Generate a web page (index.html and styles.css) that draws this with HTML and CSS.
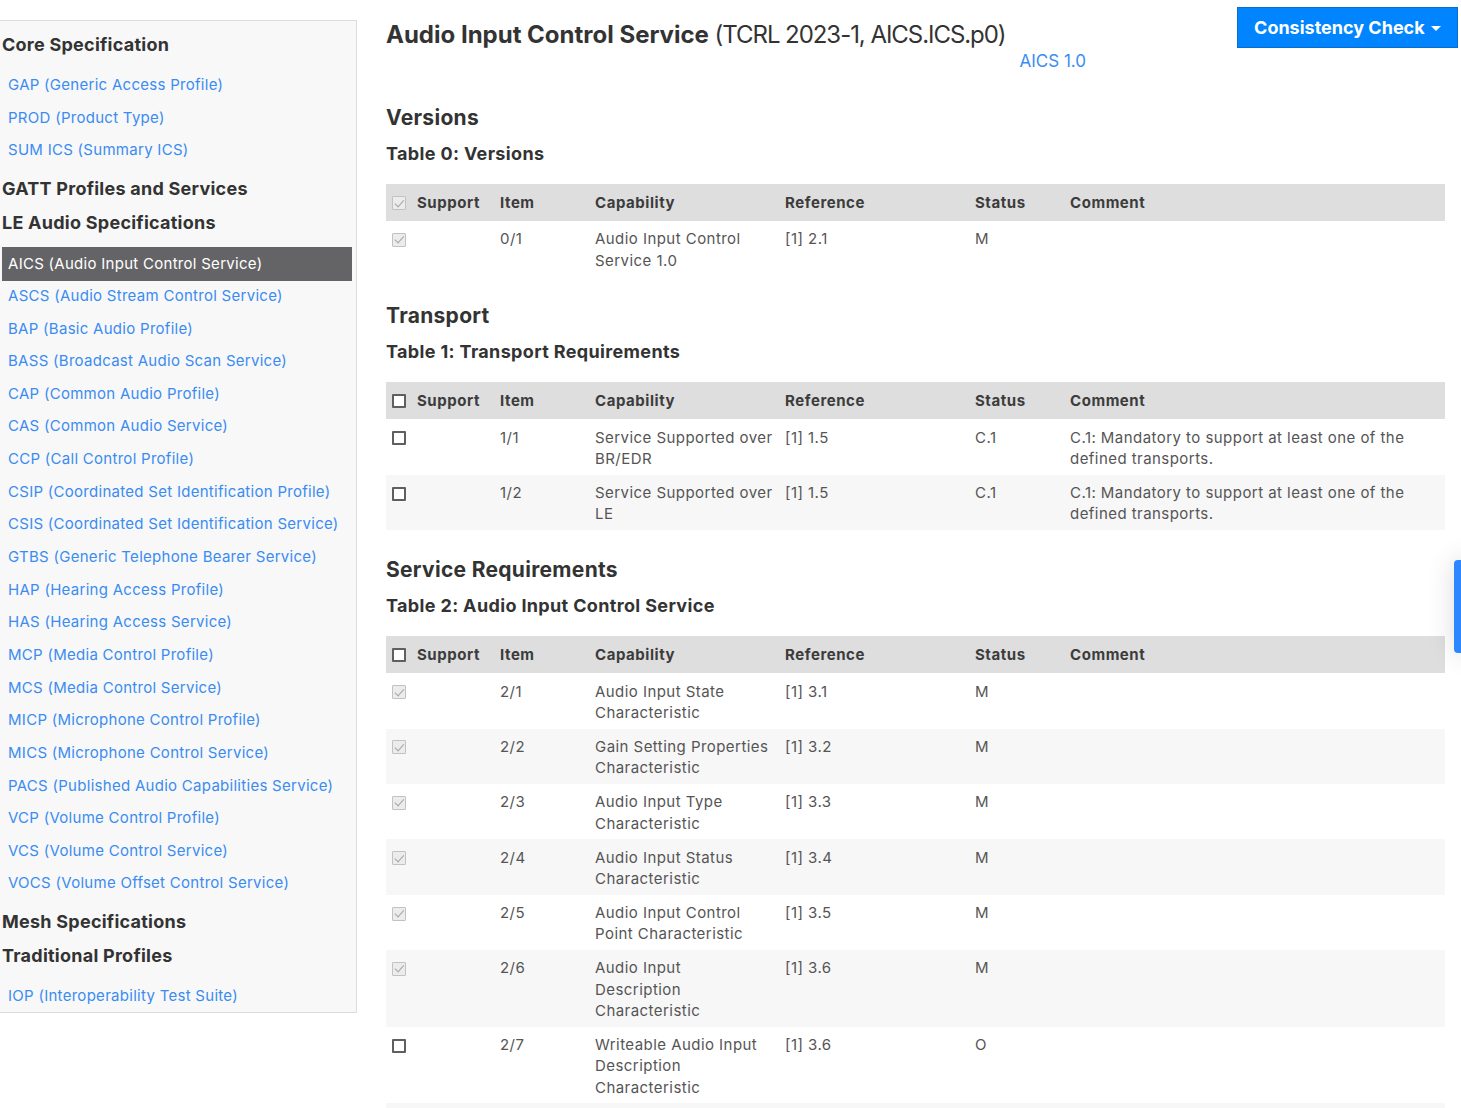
FILE: index.html
```html
<!DOCTYPE html>
<html lang="en">
<head>
<meta charset="utf-8">
<title>Audio Input Control Service</title>
<link rel="stylesheet" href="styles.css">
</head>
<body>
<div class="page">
  <aside class="sidebar">
    <div class="side-heading">Core Specification</div>
    <ul class="side-list">
      <li><a href="#">GAP (Generic Access Profile)</a></li>
      <li><a href="#">PROD (Product Type)</a></li>
      <li><a href="#">SUM ICS (Summary ICS)</a></li>
    </ul>
    <div class="side-heading">GATT Profiles and Services</div>
    <div class="side-heading">LE Audio Specifications</div>
    <ul class="side-list">
      <li><a href="#" class="active">AICS (Audio Input Control Service)</a></li>
      <li><a href="#">ASCS (Audio Stream Control Service)</a></li>
      <li><a href="#">BAP (Basic Audio Profile)</a></li>
      <li><a href="#">BASS (Broadcast Audio Scan Service)</a></li>
      <li><a href="#">CAP (Common Audio Profile)</a></li>
      <li><a href="#">CAS (Common Audio Service)</a></li>
      <li><a href="#">CCP (Call Control Profile)</a></li>
      <li><a href="#">CSIP (Coordinated Set Identification Profile)</a></li>
      <li><a href="#">CSIS (Coordinated Set Identification Service)</a></li>
      <li><a href="#">GTBS (Generic Telephone Bearer Service)</a></li>
      <li><a href="#">HAP (Hearing Access Profile)</a></li>
      <li><a href="#">HAS (Hearing Access Service)</a></li>
      <li><a href="#">MCP (Media Control Profile)</a></li>
      <li><a href="#">MCS (Media Control Service)</a></li>
      <li><a href="#">MICP (Microphone Control Profile)</a></li>
      <li><a href="#">MICS (Microphone Control Service)</a></li>
      <li><a href="#">PACS (Published Audio Capabilities Service)</a></li>
      <li><a href="#">VCP (Volume Control Profile)</a></li>
      <li><a href="#">VCS (Volume Control Service)</a></li>
      <li><a href="#">VOCS (Volume Offset Control Service)</a></li>
    </ul>
    <div class="side-heading">Mesh Specifications</div>
    <div class="side-heading">Traditional Profiles</div>
    <ul class="side-list last">
      <li><a href="#">IOP (Interoperability Test Suite)</a></li>
    </ul>
  </aside>

  <main class="main">
    <header class="top">
      <div class="title-block">
        <h1 class="title">Audio Input Control Service <span class="title-sub">(TCRL 2023-1, AICS.ICS.p0)</span></h1>
        <div class="version"><a href="#">AICS 1.0</a></div>
      </div>
      <button class="btn-check" type="button">Consistency Check <span class="caret"></span></button>
    </header>

    <h2 class="section">Versions</h2>
    <h3 class="table-title">Table 0: Versions</h3>
    <table class="ics">
      <colgroup><col class="c-sup"><col class="c-item"><col class="c-cap"><col class="c-ref"><col class="c-stat"><col class="c-com"></colgroup>
      <thead>
        <tr><th><span class="cb cb-dis"></span>Support</th><th>Item</th><th>Capability</th><th>Reference</th><th>Status</th><th>Comment</th></tr>
      </thead>
      <tbody>
        <tr><td><span class="cb cb-dis"></span></td><td>0/1</td><td class="cap">Audio Input Control<br>Service 1.0</td><td>[1] 2.1</td><td>M</td><td></td></tr>
      </tbody>
    </table>

    <h2 class="section">Transport</h2>
    <h3 class="table-title">Table 1: Transport Requirements</h3>
    <table class="ics">
      <colgroup><col class="c-sup"><col class="c-item"><col class="c-cap"><col class="c-ref"><col class="c-stat"><col class="c-com"></colgroup>
      <thead>
        <tr><th><span class="cb"></span>Support</th><th>Item</th><th>Capability</th><th>Reference</th><th>Status</th><th>Comment</th></tr>
      </thead>
      <tbody>
        <tr><td><span class="cb"></span></td><td>1/1</td><td class="cap">Service Supported over<br>BR/EDR</td><td>[1] 1.5</td><td>C.1</td><td class="com">C.1: Mandatory to support at least one of the<br>defined transports.</td></tr>
        <tr><td><span class="cb"></span></td><td>1/2</td><td class="cap">Service Supported over<br>LE</td><td>[1] 1.5</td><td>C.1</td><td class="com">C.1: Mandatory to support at least one of the<br>defined transports.</td></tr>
      </tbody>
    </table>

    <h2 class="section">Service Requirements</h2>
    <h3 class="table-title">Table 2: Audio Input Control Service</h3>
    <table class="ics">
      <colgroup><col class="c-sup"><col class="c-item"><col class="c-cap"><col class="c-ref"><col class="c-stat"><col class="c-com"></colgroup>
      <thead>
        <tr><th><span class="cb"></span>Support</th><th>Item</th><th>Capability</th><th>Reference</th><th>Status</th><th>Comment</th></tr>
      </thead>
      <tbody>
        <tr><td><span class="cb cb-dis"></span></td><td>2/1</td><td class="cap">Audio Input State<br>Characteristic</td><td>[1] 3.1</td><td>M</td><td></td></tr>
        <tr><td><span class="cb cb-dis"></span></td><td>2/2</td><td class="cap">Gain Setting Properties<br>Characteristic</td><td>[1] 3.2</td><td>M</td><td></td></tr>
        <tr><td><span class="cb cb-dis"></span></td><td>2/3</td><td class="cap">Audio Input Type<br>Characteristic</td><td>[1] 3.3</td><td>M</td><td></td></tr>
        <tr><td><span class="cb cb-dis"></span></td><td>2/4</td><td class="cap">Audio Input Status<br>Characteristic</td><td>[1] 3.4</td><td>M</td><td></td></tr>
        <tr><td><span class="cb cb-dis"></span></td><td>2/5</td><td class="cap">Audio Input Control<br>Point Characteristic</td><td>[1] 3.5</td><td>M</td><td></td></tr>
        <tr><td><span class="cb cb-dis"></span></td><td>2/6</td><td class="cap">Audio Input<br>Description<br>Characteristic</td><td>[1] 3.6</td><td>M</td><td></td></tr>
        <tr><td><span class="cb"></span></td><td>2/7</td><td class="cap">Writeable Audio Input<br>Description<br>Characteristic</td><td>[1] 3.6</td><td>O</td><td></td></tr>
        <tr class="filler"><td></td><td></td><td></td><td></td><td></td><td></td></tr>
      </tbody>
    </table>
  </main>
</div>
<div class="feedback-tab"></div>
</body>
</html>
```

FILE: styles.css
```css
html, body {
  margin: 0;
  padding: 0;
  background: #ffffff;
}

body {
  font-family: Inter, "Open Sans", "DejaVu Sans", sans-serif;
  color: #555555;
  font-size: 15px;
  overflow: hidden;
}

a {
  color: #3a8cf2;
  text-decoration: none;
}

.page {
  display: flex;
  align-items: flex-start;
}

/* ---------- Sidebar ---------- */
.sidebar {
  flex: 0 0 auto;
  width: 350px;
  margin-top: 20px;
  padding: 7px 4px 0 2px;
  background: #f8f8f8;
  border: 1px solid #dddddd;
  border-left: none;
}

.side-heading {
  height: 34px;
  line-height: 34px;
  font-size: 18px;
  font-weight: 700;
  letter-spacing: 0.25px;
  color: #333333;
  white-space: nowrap;
}

.side-list {
  list-style: none;
  margin: 0;
  padding: 7px 0 5.3px;
}

.side-list.last {
  padding-bottom: 0;
}

.side-list a {
  display: block;
  height: 32.65px;
  line-height: 32.65px;
  padding: 0 6px;
  font-size: 15px;
  letter-spacing: 0.28px;
  white-space: nowrap;
}

.side-list.last a {
  height: 31.5px;
  line-height: 31.5px;
}

.side-list a.active {
  height: 34px;
  line-height: 34px;
  margin-top: 0;
  margin-bottom: -1.3px;
  background: #646467;
  color: #ffffff;
}

/* ---------- Main ---------- */
.main {
  flex: 0 0 auto;
  width: 1059px;
  margin-left: 29px;
}

.top {
  display: flex;
  justify-content: space-between;
  align-items: flex-start;
  padding-top: 7px;
  margin-right: -13px;
}

.title-block {
  width: 700px;
  margin-top: 13px;
}

.title {
  margin: 0;
  font-size: 24px;
  line-height: 30px;
  font-weight: 700;
  color: #333333;
  white-space: nowrap;
}

.title-sub {
  font-weight: 400;
  letter-spacing: -1.05px;
}

.version {
  text-align: right;
  font-size: 17px;
  line-height: 22px;
}

.btn-check {
  width: 221px;
  height: 41px;
  padding: 0;
  border: 1px solid #0b6dcc;
  background: #0084ff;
  color: #ffffff;
  font-family: inherit;
  font-size: 18px;
  font-weight: 700;
  cursor: pointer;
}

.caret {
  display: inline-block;
  width: 0;
  height: 0;
  margin-left: 2px;
  vertical-align: 3px;
  border-top: 5px solid #ffffff;
  border-left: 5px solid transparent;
  border-right: 5px solid transparent;
}

.section {
  margin: 32px 0 0;
  font-size: 21px;
  line-height: 28px;
  font-weight: 700;
  letter-spacing: 0.3px;
  color: #333333;
}

.ics + .section {
  margin-top: 26px;
}

.table-title {
  margin: 10px 0 0;
  font-size: 18px;
  line-height: 24px;
  font-weight: 700;
  letter-spacing: 0.35px;
  color: #333333;
}

/* ---------- Tables ---------- */
.ics {
  width: 100%;
  margin-top: 18px;
  border-collapse: collapse;
  table-layout: fixed;
}

.c-sup { width: 106px; }
.c-item { width: 95px; }
.c-cap { width: 190px; }
.c-ref { width: 190px; }
.c-stat { width: 95px; }

.ics th {
  height: 37px;
  padding: 0 6px 0 8px;
  background: #dedede;
  text-align: left;
  font-size: 15px;
  font-weight: 700;
  letter-spacing: 0.55px;
  color: #3c3c3c;
  white-space: nowrap;
  box-sizing: border-box;
}

.ics td {
  padding: 7.4px 6px 5.4px 8px;
  vertical-align: top;
  font-size: 15px;
  line-height: 21.3px;
  letter-spacing: 0.45px;
  color: #555555;
}

.ics tbody tr:nth-child(even) td {
  background: #f7f7f7;
}

.ics tr.filler td {
  height: 60px;
}

.ics td.cap,
.ics td.com {
  white-space: nowrap;
}

/* ---------- Checkboxes ---------- */
.cb {
  display: inline-block;
  box-sizing: border-box;
  width: 14px;
  height: 14px;
  margin-left: -2px;
  margin-right: 11px;
  vertical-align: -2px;
  border: 2px solid #5f5f5f;
  border-radius: 1px;
  background: #ffffff;
  position: relative;
}

td .cb {
  margin-top: 4.5px;
  vertical-align: top;
}

.cb-dis {
  border: 1px solid #c2c2c2;
  background: #ececec;
}

.cb-dis::after {
  content: "";
  position: absolute;
  left: 3.5px;
  top: 0.5px;
  width: 4px;
  height: 7.5px;
  border-right: 1.7px solid #a6a6a6;
  border-bottom: 1.7px solid #a6a6a6;
  transform: rotate(42deg);
}

/* ---------- Floating tab ---------- */
.feedback-tab {
  position: fixed;
  top: 560px;
  right: -20px;
  width: 27px;
  height: 93px;
  border-radius: 4px;
  background: #2d87ff;
  box-shadow: 0 0 28px rgba(0, 0, 0, 0.14);
}
```
